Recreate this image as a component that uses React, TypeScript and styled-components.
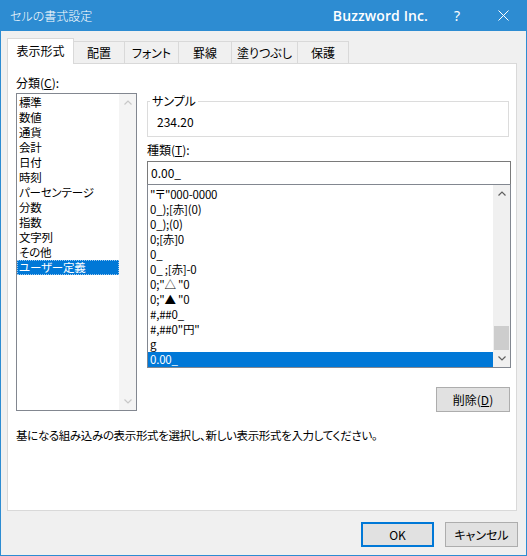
import React from 'react'
import styled, { createGlobalStyle } from 'styled-components'

const ACCENT = '#2d8cd2'
const SELECT = '#0078d7'

const GlobalStyle = createGlobalStyle`
  html, body {
    margin: 0;
    padding: 0;
    background: #f0f0f0;
  }
  body {
    font-family: "Noto Sans CJK JP", "Noto Sans", sans-serif;
    font-size: 11.5px;
    color: #000;
    font-feature-settings: "palt";
  }
`

const Window = styled.div`
  width: 527px;
  height: 556px;
  box-sizing: border-box;
  border: 1px solid ${ACCENT};
  border-top: none;
  background: #f0f0f0;
  display: flex;
  flex-direction: column;
`

const TitleBar = styled.div`
  height: 31px;
  flex-shrink: 0;
  display: flex;
  align-items: center;
  background: ${ACCENT};
  color: #fff;
  padding-left: 9px;
`

const Caption = styled.div`
  font-size: 12px;
  font-weight: 300;
  flex: 1;
`

const Company = styled.div`
  font-family: "Open Sans", "Noto Sans", sans-serif;
  font-weight: 600;
  font-size: 14px;
  letter-spacing: 0.1px;
  margin-right: 6px;
`

const CaptionButton = styled.div`
  width: 46px;
  height: 31px;
  display: flex;
  align-items: center;
  justify-content: center;
  font-family: "Noto Sans", sans-serif;
  font-size: 14px;
`

const Body = styled.div`
  flex: 1;
  display: flex;
  flex-direction: column;
  padding: 7px 8px 8px 6px;
`

const TabStrip = styled.div`
  height: 25px;
  display: flex;
  align-items: flex-end;
  position: relative;
  z-index: 1;
`

const Tab = styled.div<{ $active?: boolean; $w: number }>`
  width: ${(p) => p.$w}px;
  box-sizing: border-box;
  display: flex;
  align-items: center;
  justify-content: center;
  font-size: 12px;
  border: 1px solid #d9d9d9;
  border-bottom: none;
  ${(p) =>
    p.$active
      ? `
    height: 26px;
    margin-bottom: -1px;
    background: #fff;
    padding-bottom: 2px;
  `
      : `
    height: 22px;
    border-left: none;
    background: #f0f0f0;
  `}
`

const Panel = styled.div`
  width: 510px;
  height: 448px;
  box-sizing: border-box;
  background: #fff;
  border: 1px solid #d9d9d9;
  padding: 10px 5px 0 8px;
`

const Columns = styled.div`
  display: grid;
  grid-template-columns: 121px 364px;
  column-gap: 10px;
`

const Column = styled.div`
  display: flex;
  flex-direction: column;
`

const Label = styled.div<{ $h?: number }>`
  height: ${(p) => p.$h ?? 14}px;
  line-height: ${(p) => p.$h ?? 14}px;
  font-size: 12px;
  u {
    text-decoration: underline;
    text-underline-offset: 1px;
  }
`

const ListBox = styled.div<{ $h: number }>`
  height: ${(p) => p.$h}px;
  box-sizing: border-box;
  border: 1px solid #828790;
  display: grid;
  grid-template-columns: 1fr 17px;
  background: #fff;
  overflow: hidden;
`

const Items = styled.div<{ $top: number }>`
  padding-top: ${(p) => p.$top}px;
  overflow: hidden;
`

const Item = styled.div<{ $selected?: boolean; $focus?: boolean }>`
  height: 15px;
  line-height: 15px;
  padding-left: 2px;
  white-space: nowrap;
  letter-spacing: -0.2px;
  ${(p) => p.$selected && `background: ${SELECT}; color: #fff;`}
  ${(p) => p.$focus && `outline: 1px dotted #9cc8ee; outline-offset: -1px;`}
`

const ScrollBar = styled.div<{ $disabled?: boolean }>`
  background: ${(p) => (p.$disabled ? '#f4f4f4' : '#f0f0f0')};
  display: flex;
  flex-direction: column;
  color: ${(p) => (p.$disabled ? '#c8c8c8' : '#606060')};
`

const Arrow = styled.div`
  height: 17px;
  display: flex;
  align-items: center;
  justify-content: center;
`

const Track = styled.div`
  flex: 1;
  display: flex;
  flex-direction: column;
  justify-content: flex-end;
`

const Thumb = styled.div`
  height: 24px;
  margin: 0 1px;
  background: #cdcdcd;
`

const GroupBox = styled.fieldset`
  margin: 20px 2px 0 0;
  padding: 0 0 7px 2px;
  border: 1px solid #dcdcdc;
  min-width: 0;
  legend {
    padding: 0 2px;
    line-height: 14px;
    height: 14px;
    font-size: 12px;
  }
`

const SampleValue = styled.div`
  margin: 7px 0 0 7px;
  height: 14px;
  line-height: 14px;
  font-size: 12px;
`

const TextBox = styled.div`
  margin-top: 4px;
  height: 23px;
  box-sizing: border-box;
  border: 1px solid #7a7a7a;
  border-bottom: none;
  padding-left: 3px;
  line-height: 22px;
  font-size: 12px;
`

const Button = styled.div<{ $w: number; $default?: boolean }>`
  width: ${(p) => p.$w}px;
  height: 25px;
  box-sizing: border-box;
  display: flex;
  align-items: center;
  justify-content: center;
  font-size: 12px;
  background: #e1e1e1;
  border: ${(p) => (p.$default ? `2px solid ${SELECT}` : '1px solid #adadad')};
  u {
    text-decoration: underline;
    text-underline-offset: 1px;
  }
`

const DeleteRow = styled.div`
  margin-top: 19px;
  display: flex;
  justify-content: flex-end;
  padding-right: 1px;
`

const Hint = styled.div`
  margin-top: 16px;
  height: 14px;
  line-height: 14px;
  font-size: 11.5px;
  letter-spacing: -0.35px;
`

const Footer = styled.div`
  margin-top: 11px;
  display: flex;
  justify-content: flex-end;
  gap: 11px;
`

const Chevron = ({ up }: { up?: boolean }) => (
  <svg width="8" height="5" viewBox="0 0 8 5">
    <path
      d={up ? 'M0.5 4.5 L4 1 L7.5 4.5' : 'M0.5 0.5 L4 4 L7.5 0.5'}
      fill="none"
      stroke="currentColor"
      strokeWidth="1.2"
    />
  </svg>
)

const tabs = [
  { label: '表示形式', w: 67 },
  { label: '配置', w: 51 },
  { label: 'フォント', w: 54 },
  { label: '罫線', w: 53 },
  { label: '塗りつぶし', w: 66 },
  { label: '保護', w: 51 },
]

const categories = [
  '標準',
  '数値',
  '通貨',
  '会計',
  '日付',
  '時刻',
  'パーセンテージ',
  '分数',
  '指数',
  '文字列',
  'その他',
  'ユーザー定義',
]

const formats = [
  '"〒"000-0000',
  '0_);[赤](0)',
  '0_);(0)',
  '0;[赤]0',
  '0_',
  '0_ ;[赤]-0',
  '0;"△ "0',
  '0;"▲ "0',
  '#,##0_',
  '#,##0"円"',
  'g',
  '0.00_',
]

export default function App() {
  return (
    <>
      <GlobalStyle />
      <Window>
        <TitleBar>
          <Caption>セルの書式設定</Caption>
          <Company>Buzzword Inc.</Company>
          <CaptionButton>?</CaptionButton>
          <CaptionButton>
            <svg width="11" height="11" viewBox="0 0 11 11">
              <path d="M0.5 0.5 L10.5 10.5 M10.5 0.5 L0.5 10.5" stroke="#fff" strokeWidth="1" />
            </svg>
          </CaptionButton>
        </TitleBar>
        <Body>
          <TabStrip>
            {tabs.map((t, i) => (
              <Tab key={t.label} $w={t.w} $active={i === 0}>
                {t.label}
              </Tab>
            ))}
          </TabStrip>
          <Panel>
            <Columns>
              <Column>
                <Label $h={18}>
                  分類(<u>C</u>):
                </Label>
                <ListBox $h={318} style={{ marginTop: 1 }}>
                  <Items $top={1}>
                    {categories.map((c, i) => (
                      <Item key={c} $selected={i === categories.length - 1} $focus={i === categories.length - 1}>
                        {c}
                      </Item>
                    ))}
                  </Items>
                  <ScrollBar $disabled>
                    <Arrow>
                      <Chevron up />
                    </Arrow>
                    <Track />
                    <Arrow>
                      <Chevron />
                    </Arrow>
                  </ScrollBar>
                </ListBox>
              </Column>
              <Column>
                <GroupBox>
                  <legend>サンプル</legend>
                  <SampleValue>234.20</SampleValue>
                </GroupBox>
                <Label style={{ marginTop: 6 }}>
                  種類(<u>T</u>):
                </Label>
                <TextBox>0.00_</TextBox>
                <ListBox $h={184}>
                  <Items $top={2}>
                    {formats.map((f, i) => (
                      <Item key={f} $selected={i === formats.length - 1}>
                        {f}
                      </Item>
                    ))}
                  </Items>
                  <ScrollBar>
                    <Arrow>
                      <Chevron up />
                    </Arrow>
                    <Track>
                      <Thumb />
                    </Track>
                    <Arrow>
                      <Chevron />
                    </Arrow>
                  </ScrollBar>
                </ListBox>
                <DeleteRow>
                  <Button $w={74}>
                    削除(<u>D</u>)
                  </Button>
                </DeleteRow>
              </Column>
            </Columns>
            <Hint>基になる組み込みの表示形式を選択し、新しい表示形式を入力してください。</Hint>
          </Panel>
          <Footer>
            <Button $w={73} $default>
              OK
            </Button>
            <Button $w={73}>キャンセル</Button>
          </Footer>
        </Body>
      </Window>
    </>
  )
}
